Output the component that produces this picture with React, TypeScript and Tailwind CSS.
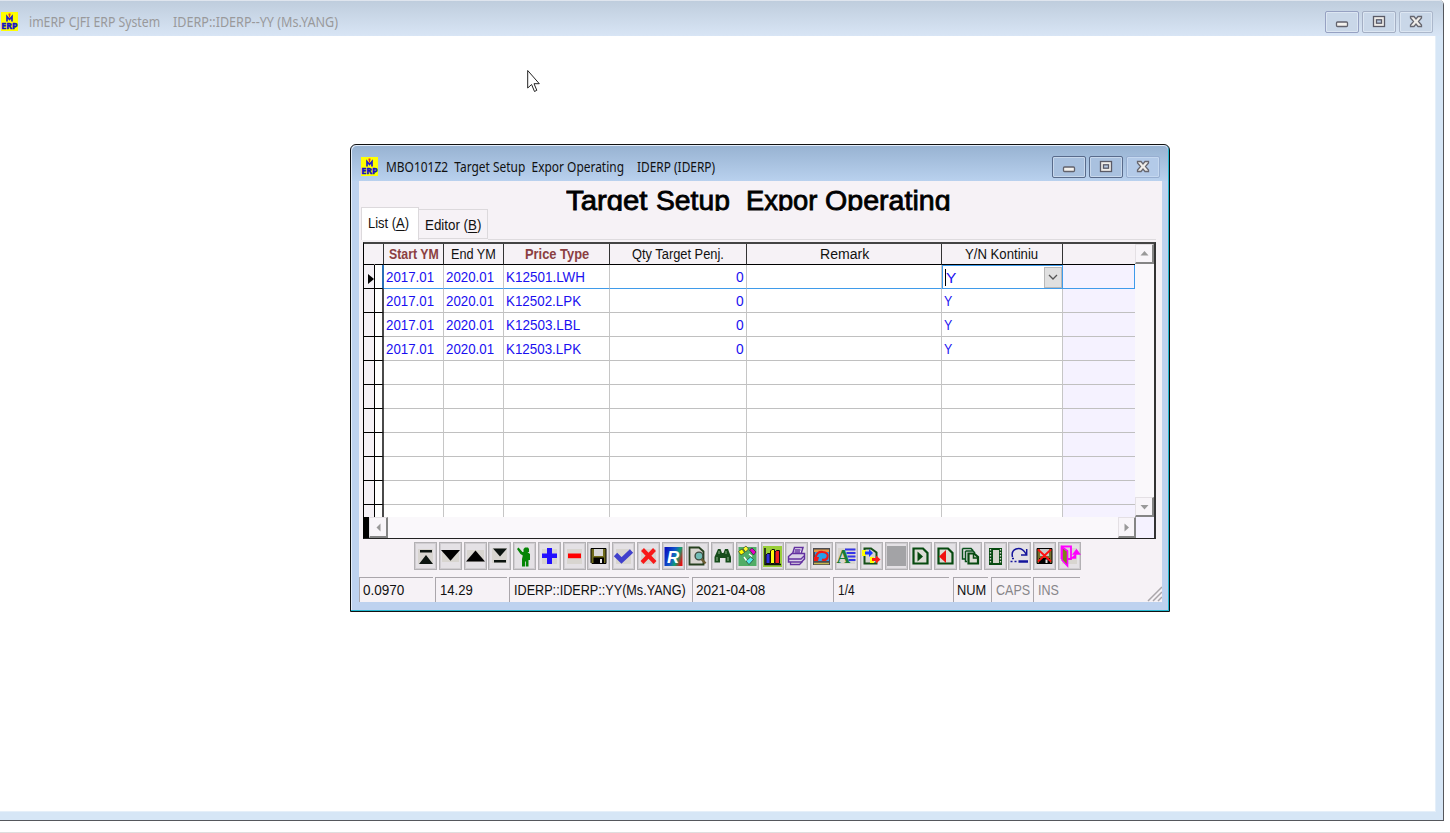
import { useLayoutEffect, useRef, useState, type ReactNode } from "react";

/** Single line of text squeezed or stretched to an exact width. */
function Fit({ w, className = "", children }: { w: number; className?: string; children: ReactNode }) {
  const ref = useRef<HTMLSpanElement>(null);
  const [scale, setScale] = useState(1);
  useLayoutEffect(() => {
    if (ref.current) setScale(w / ref.current.offsetWidth);
  }, [w]);
  return (
    <span className={`block shrink-0 ${className}`} style={{ width: w }}>
      <span ref={ref} className="inline-block origin-left whitespace-pre" style={{ transform: `scaleX(${scale})` }}>
        {children}
      </span>
    </span>
  );
}

function Logo() {
  return (
    <svg className="h-[19px] w-[17px] shrink-0" viewBox="0 0 17 19">
      <rect width="17" height="19" fill="#ffff00" />
      <path d="M6 9.500V4.500L8.500 7.500L11 4.500V9.500" fill="none" stroke="#2020c8" strokeWidth="1.700" />
      <path d="M7.500 1.500H9.500V3.500H9V5.500H8V3.500H7.500Z" fill="#f03020" />
      <text
        x="0.300"
        y="16.800"
        fontSize="8.300"
        fontWeight="bold"
        textLength="16"
        lengthAdjust="spacingAndGlyphs"
        fill="#1010c8"
        stroke="#1010c8"
        strokeWidth=".5"
      >
        ERP
      </text>
    </svg>
  );
}

type Glyph = "min" | "max" | "close";

function CaptionButton({ glyph, cls }: { glyph: Glyph; cls: string }) {
  return (
    <div className={`flex h-[22px] w-[34px] items-center justify-center rounded-[2px] border ${cls}`}>
      <svg className="h-[14px] w-[16px]" viewBox="0 0 16 14">
        {glyph === "min" && (
          <rect x="2.500" y="7" width="11" height="4.500" rx="1" fill="#f4f2ee" stroke="#62626c" strokeWidth="1.300" />
        )}
        {glyph === "max" && (
          <>
            <rect x="2.500" y="1.500" width="11" height="10" fill="#eeece8" stroke="#5a5a66" strokeWidth="1.300" />
            <rect x="5.500" y="4.800" width="5" height="3.400" fill="#b9cbe4" stroke="#5a5a66" strokeWidth="1.300" />
          </>
        )}
        {glyph === "close" && (
          <path
            d="M2.500 1.500H6L8 4L10 1.500H13.500V3L10.500 6.500L13.500 10V11.500H10L8 9L6 11.500H2.500V10L5.500 6.500L2.500 3Z"
            fill="#efede9"
            stroke="#66666f"
            strokeWidth="1.300"
          />
        )}
      </svg>
    </div>
  );
}

const COLS = "grid grid-cols-[11px_9px_60px_60px_106px_137px_195px_121px_72px]";

const rows = [
  ["2017.01", "2020.01", "K12501.LWH", "0", "Y"],
  ["2017.01", "2020.01", "K12502.LPK", "0", "Y"],
  ["2017.01", "2020.01", "K12503.LBL", "0", "Y"],
  ["2017.01", "2020.01", "K12503.LPK", "0", "Y"],
];
const typeWidths = [79, 75, 74, 75];

function HeaderCell({ children, cls = "" }: { children?: ReactNode; cls?: string }) {
  return (
    <div className={`flex items-center justify-center overflow-hidden border-r border-b border-black border-r-[#333] pb-px ${cls}`}>
      {children}
    </div>
  );
}

function Row({ index }: { index: number }) {
  const r = rows[index];
  const active = index === 0;
  const last = index === 10;
  const line = active ? "border-b border-b-[#3f9bea]" : last ? "" : "border-b border-b-[#c0c0c0]";
  const gut = last ? "" : "border-b border-b-black";
  const cell = `flex items-center overflow-hidden border-r border-r-[#c6c6c6] bg-white ${line}`;
  return (
    <div className={`${COLS} ${last ? "h-[12px]" : "h-6"} text-[15.5px] leading-none text-[#1a10f0]`}>
      <div className={`flex items-center justify-end border-r border-r-black bg-[#f5f1f6] ${gut}`}>
        {active && (
          <svg className="mt-[5px] h-[10px] w-[6px]" viewBox="0 0 6 10">
            <path d="M0 0L6 5L0 10Z" fill="#000" />
          </svg>
        )}
      </div>
      <div className={`border-r-2 bg-white ${gut} ${active ? "border-r-[#2a6fb4]" : "border-r-[#4a4a4a]"}`} />
      <div className={`pl-[2px] ${cell}`}>{r && <Fit w={48}>{r[0]}</Fit>}</div>
      <div className={`pl-[2px] ${cell}`}>{r && <Fit w={48}>{r[1]}</Fit>}</div>
      <div className={`pl-[2px] ${cell}`}>{r && <Fit w={typeWidths[index]}>{r[2]}</Fit>}</div>
      <div className={`justify-end pr-[2px] ${cell}`}>{r && <Fit w={8}>{r[3]}</Fit>}</div>
      <div className={cell} />
      {active ? (
        <div className="flex items-center border border-[#3f9bea] bg-white pl-[2px]">
          <span className="h-[17px] w-px bg-black" />
          <Fit w={10} className="mt-[2px]">
            Y
          </Fit>
          <div className="ml-auto flex h-[21px] w-[18px] items-center justify-center border border-[#b8b8b8] bg-[#e0e0e0]">
            <svg className="h-[6px] w-[10px]" viewBox="0 0 10 6">
              <path d="M1 1L5 5L9 1" fill="none" stroke="#555" strokeWidth="1.300" />
            </svg>
          </div>
        </div>
      ) : (
        <div className={`pl-[2px] ${cell}`}>{r && <Fit w={8}>{r[4]}</Fit>}</div>
      )}
      <div className={`bg-[#f5f2ff] ${line} ${active ? "border-r border-r-[#3f9bea]" : ""}`} />
    </div>
  );
}

function ScrollButton({ d, cls }: { d: string; cls: string }) {
  return (
    <div
      className={`flex shrink-0 items-center justify-center border-t border-r-2 border-b-2 border-l border-t-[#e4e0e4] border-r-[#858585] border-b-[#858585] border-l-[#e4e0e4] bg-[#f8f5f9] ${cls}`}
    >
      <svg className="h-[9px] w-[9px]" viewBox="0 0 9 9">
        <path d={d} fill="#999" />
      </svg>
    </div>
  );
}

const doc = "M4.5 6.5H14L18.5 11V21.5H4.5Z";

const tools: ReactNode[] = [
  <>
    <rect x="4" y="7" width="15" height="15" fill="#d8d5d0" />
    <path d="M6 8H18V10.6H6ZM12 13L19 22H5Z" fill="#0c1410" />
  </>,
  <>
    <rect x="3" y="8" width="17" height="12" fill="#d8d5d0" />
    <path d="M2 8H21L11.500 18.700Z" fill="#000" />
  </>,
  <>
    <rect x="3" y="8" width="17" height="12" fill="#d8d5d0" />
    <path d="M2 19.500H21L11.500 8.500Z" fill="#000" />
  </>,
  <>
    <rect x="4" y="6" width="15" height="15" fill="#d8d5d0" />
    <path d="M5 6.500H19L12 14.500ZM6 18H18V20.500H6Z" fill="#0c1410" />
  </>,
  <path
    d="M4 7L5.500 5.500L9.500 10H10.500V7L12 5.500H15L16 7V10H14.500L17 12V18H15.500V24.500H12.800V19.500H12V24.500H9V17L9.800 13.500L7.500 12Z"
    fill="#058505"
  />,
  <>
    <rect x="4" y="7" width="15" height="15" fill="#d8d5d0" />
    <path d="M9 6H14V11.500H19V16H14V22H9V16H4V11.500H9Z" fill="#2310ff" />
  </>,
  <>
    <rect x="4" y="7" width="15" height="15" fill="#d8d5d0" />
    <rect x="5" y="11.500" width="13" height="4.700" fill="#ff0000" />
  </>,
  <>
    <path d="M4 6.500H19V21.500H5L4 20.500Z" fill="#6f6b1c" stroke="#000" />
    <path d="M7 7H16V14H7Z" fill="#d8d8d8" />
    <path d="M6.500 15.500H17V21H6.500Z" fill="#000" />
    <path d="M13 17H15V21H13Z" fill="#e8e8e8" />
  </>,
  <>
    <rect x="4" y="7" width="15" height="15" fill="#d8d5d0" />
    <path d="M3.500 12.500L9.500 18.500L19.500 9" fill="none" stroke="#4040cc" strokeWidth="4.800" />
  </>,
  <>
    <rect x="4" y="7" width="15" height="15" fill="#d8d5d0" />
    <path d="M5.500 7.500L18 20.500M17.500 7.500L5 20.500" fill="none" stroke="#f81818" strokeWidth="4" />
  </>,
  <>
    <rect x="2.500" y="5" width="18" height="19" fill="url(#spectrum)" />
    <text x="5" y="20.500" fontSize="17" fontWeight="bold" fontStyle="italic" fill="#fff">
      R
    </text>
  </>,
  <>
    <path d="M3.500 5.500H13L17.500 9.500V22.500H3.500Z" fill="#d8d5d0" stroke="#26401f" strokeWidth="1.800" />
    <circle cx="13" cy="14" r="3.900" fill="#72bcb6" stroke="#3f4a40" strokeWidth="1.400" />
    <path d="M15.500 17L19.500 21.500" stroke="#6b5a30" strokeWidth="2.500" />
  </>,
  <>
    <path d="M7 7H9.500L11 11H12.500L14 7H17L20 15V20.500H14.500V16H9V20.500H3.500V15Z" fill="#174d1c" />
    <path d="M6 15V19M17 15V19M8 9V12M15 9V12" stroke="#8fb58b" />
  </>,
  <>
    <rect x="2.500" y="5" width="18" height="19" fill="#51ad67" />
    <path d="M2.500 9.500L6 7L8.500 10.500L5 13Z" fill="#ffff00" stroke="#222" strokeWidth=".6" />
    <path d="M7 6.500L10 4L12.500 7L9.500 10Z" fill="#ffff30" stroke="#222" strokeWidth=".6" />
    <path d="M13.500 8L16 6L20 10L17.500 13Z" fill="#e800c8" stroke="#222" strokeWidth=".6" />
    <path d="M10 19L14.500 15L17.500 17.500L13 22.500Z" fill="#52e8e8" stroke="#222" strokeWidth=".6" />
    <path d="M13 12L16 14.500M8 15L10.500 18.500" stroke="#fff" strokeWidth="1.300" />
  </>,
  <>
    <rect x="2" y="4" width="19" height="21" fill="#99ce39" />
    <path d="M4 6V22.500H20" fill="none" stroke="#111" strokeWidth="1.500" />
    <path d="M5 13L6.500 11.500H9V21.500H5Z" fill="#3030e0" stroke="#111" />
    <path d="M9.500 9L11 7.500H13.500V21.500H9.500Z" fill="#ffff10" stroke="#111" />
    <path d="M14 10L15.500 8.500H18.500V21.500H14Z" fill="#f02020" stroke="#111" />
  </>,
  <>
    <path d="M7.500 12L9.500 5.500H18L16 12" fill="#f0ecf6" stroke="#6331a0" strokeWidth="1.500" />
    <path d="M3.500 14.500L7 11.500H19.500V17L16.500 20H3.500Z" fill="#d9d0e6" stroke="#6331a0" strokeWidth="1.500" />
    <path d="M5.500 20V22.500H14.500L17.500 19.500M10 8H15.500M9.500 10H15M4 17H16L19 14" fill="none" stroke="#6331a0" strokeWidth="1.300" />
  </>,
  <>
    <rect x="3" y="6" width="17" height="17" fill="#4a4a50" />
    <rect x="5" y="8" width="14" height="11" fill="#27a0ea" />
    <path d="M4 7.500H19V10H4Z" fill="#e59a42" />
    <path d="M6 18V14Q8 9 13 10Q19 11 17.500 15.500Q16 19 12 17.500" fill="none" stroke="#f01818" strokeWidth="2.200" />
    <path d="M4 15H9L8 19H4Z" fill="#f01818" />
    <path d="M4 21.500H19" stroke="#c8b850" strokeWidth="1.500" />
  </>,
  <>
    <rect x="3" y="6" width="17" height="16" fill="#d8d5d0" />
    <path d="M10 7.500H20.500M11.500 11H20.500M12.500 14.500H20.500M13.500 18H20.500" stroke="#3535e8" strokeWidth="1.800" />
    <text x="1.500" y="21" fontFamily="Liberation Serif" fontSize="19" fontWeight="bold" fill="#187b35">
      A
    </text>
  </>,
  <>
    <path d="M4.500 6.500H11L16.500 10.500V21.500H4.500Z" fill="#d8d5d0" stroke="#155018" strokeWidth="2" />
    <path d="M2 8H6V14H2ZM10 15H14V21H10Z" fill="#ffff00" />
    <path d="M5 9.500H9V7L13 11L9 15V12.500H5Z" fill="#1838ff" />
    <path d="M12 16H16V13.500L20.500 17.500L16 21.500V19H12Z" fill="#ff1818" />
  </>,
  <rect x="2" y="4" width="19" height="20" fill="#a3a3a6" />,
  <>
    <path d={doc} fill="#dcdcd5" stroke="#074a10" strokeWidth="2.200" />
    <path d="M8.500 9.500L14 14.500L8.500 19.500Z" fill="#074a10" />
  </>,
  <>
    <path d={doc} fill="#dcdcd5" stroke="#074a10" strokeWidth="2.200" />
    <path d="M12 8V21L5 14.500Z" fill="#f01010" />
  </>,
  <>
    <path d="M3.500 6.500H12L14 8.500M3.500 6.500V17H6M6.500 9H14L16 11M6.500 9V19.500H8" fill="none" stroke="#07501a" strokeWidth="1.500" />
    <path d="M9.500 11.500H15L19 15V21.500H9.500Z" fill="#dcdcd5" stroke="#074a10" strokeWidth="2.200" />
    <path d="M14.500 11V16H19" fill="none" stroke="#074a10" strokeWidth="1.500" />
  </>,
  <>
    <rect x="5" y="6" width="13" height="17" fill="#074a10" />
    <rect x="9" y="8" width="6" height="13" fill="#d4d4ca" />
    <path d="M6.500 7V22M16.500 7V22" stroke="#d4d4ca" strokeWidth="1.300" strokeDasharray="1.500 1.500" />
  </>,
  <>
    <path d="M4.500 15Q3 9 8 7Q14 5 18 12M18.700 7V13H13" fill="none" stroke="#15159c" strokeWidth="1.500" />
    <path d="M10.500 19.500H20" stroke="#15159c" strokeWidth="2.500" />
    <path d="M4 16.500H6M6.500 19.500H8.500M2.500 19.500H4.500" stroke="#15159c" strokeWidth="1.700" />
  </>,
  <>
    <path d="M4 6.500H19V21.500H4Z" fill="#76702b" stroke="#000" />
    <path d="M7 7H16V14H7Z" fill="#c8c8c8" />
    <path d="M6 16H17V21H6Z" fill="#000" />
    <path d="M12.500 17.500H14.500V21H12.500Z" fill="#ddd" />
    <path d="M5 7.500L18 19.500M18 7.500L5 19.500" stroke="#ff1010" strokeWidth="1.900" />
  </>,
  <>
    <rect x="4" y="6" width="15" height="16" fill="#d8d5d0" />
    <path d="M3.500 17V4.500H13V17H10" fill="none" stroke="#ff00ff" strokeWidth="1.800" />
    <path d="M4 5L9.500 9V24L4 18Z" fill="#7e8218" stroke="#ff00ff" strokeWidth="1.600" />
    <path d="M13 16H17.500V12M15.500 12L18.500 8L21.500 12Z" fill="#ff00ff" stroke="#ff00ff" strokeWidth="1.500" />
  </>,
];

function StatusPanel({ cls, w, children }: { cls: string; w: number; children: ReactNode }) {
  return (
    <div className={`flex h-[25px] shrink-0 items-center overflow-hidden border-t border-l border-[#aaa6ab] pb-px text-[15.500px] ${cls}`}>
      <Fit w={w}>{children}</Fit>
    </div>
  );
}

export default function App() {
  return (
    <div className="relative flex h-[833px] w-[1450px] flex-col justify-between overflow-hidden bg-white font-['Liberation_Sans',sans-serif] text-[15px] leading-none text-[#111]">
      <div className="flex h-[821px] w-[1444px] flex-col rounded-tr-[5px] border-r border-b border-[#55575c] bg-[#d6e6f6]">
        <header className="flex h-9 shrink-0 items-center rounded-tr-[4px] border-t border-[#dfe5ee] bg-gradient-to-b from-[#bfcddd] to-[#d8e5f5] pt-[6px] pr-[10px] pl-px font-['Noto_Sans',sans-serif] text-[14.500px] text-[#99999b]">
          <Logo />
          <Fit w={131} className="ml-[11px]">
            imERP CJFI ERP System
          </Fit>
          <Fit w={165} className="ml-[13px]">
            IDERP::IDERP--YY (Ms.YANG)
          </Fit>
          <div className="ml-auto flex gap-[3px]">
            <CaptionButton glyph="min" cls="border-[#96a1c2] bg-[#c9d7e8] shadow-[inset_0_0_0_1px_#dce6f2]" />
            <CaptionButton glyph="max" cls="border-[#a4afc4] bg-[#c9d7e8] shadow-[inset_0_0_0_1px_#dce6f2]" />
            <CaptionButton glyph="close" cls="border-[#abb7cb] bg-[#c9d7e8] shadow-[inset_0_0_0_1px_#dce6f2]" />
          </div>
        </header>
        <main className="mr-[7px] mb-2 grow border-r border-b border-[#e5eff9] bg-white" />
      </div>
      <div className="h-px bg-[#dedede]" />

      <svg className="absolute top-[69px] left-[527px] h-[24px] w-[14px]" viewBox="0 0 14 24">
        <path d="M.7 1.500V19L4.600 15.500L7.500 22.500L9.800 21.300L7 14.700H12.300Z" fill="#fff" stroke="#222" />
      </svg>

      <section className="absolute top-[144px] left-[350px] flex h-[468px] w-[820px] flex-col rounded-t-[6px] border border-[#111] bg-[#bed2ef] shadow-[inset_-1px_-1px_0_#25b8d0,inset_1px_1px_0_#e4eefb]">
        <header className="mx-px mt-px flex h-[35px] shrink-0 items-center rounded-t-[5px] bg-gradient-to-b from-[#98b3d2] to-[#b9d1ee] pt-[6px] pr-[8px] pl-[9px] font-['Noto_Sans',sans-serif] text-[14.500px]">
          <Logo />
          <Fit w={238} className="ml-[8px]">
            MBO101Z2  Target Setup  Expor Operating
          </Fit>
          <Fit w={78} className="ml-[13px]">
            IDERP (IDERP)
          </Fit>
          <div className="ml-auto flex gap-[3px]">
            <CaptionButton glyph="min" cls="border-[#596b8b] bg-[#a9c1df] shadow-[inset_0_0_0_1px_#c8d8ec]" />
            <CaptionButton glyph="max" cls="border-[#596b8b] bg-[#a9c1df] shadow-[inset_0_0_0_1px_#c8d8ec]" />
            <CaptionButton glyph="close" cls="border-[#97aed0] bg-[#b3cae8] shadow-[inset_0_0_0_1px_#c5d8f0]" />
          </div>
        </header>

        <div className="mx-[8px] flex h-[421px] w-[803px] shrink-0 flex-col bg-[#f6f2f6]">
          <div className="h-[26px]">
            <h1 className="ml-[207px] flex h-[30px] overflow-hidden pt-[5px] text-[27px] leading-[30px] font-normal text-black [-webkit-text-stroke:0.8px_black]">
              <Fit w={90}>Target </Fit>
              <Fit w={90}>Setup  </Fit>
              <Fit w={79}>Expor </Fit>
              <Fit w={126}>Operating</Fit>
            </h1>
          </div>
          <nav className="ml-[2px] flex h-[33px] shrink-0 items-end text-[15.500px]">
            <div className="flex h-[33px] w-[58px] items-center border border-b-0 border-[#dcd9dc] bg-white pb-[3px] pl-[6px]">
              <Fit w={41}>
                List (<u className="underline-offset-2">A</u>)
              </Fit>
            </div>
            <div className="mb-px flex h-[30px] w-[69px] items-center border border-l-0 border-[#dcd9dc] pt-px pl-[6px]">
              <Fit w={56}>
                Editor (<u className="underline-offset-2">B</u>)
              </Fit>
            </div>
            <div className="mr-[6px] h-px grow bg-[#dedbde]" />
          </nav>

          <div className="mt-[2px] ml-[4px] flex h-[297px] w-[793px] shrink-0 flex-col border-t-2 border-r-2 border-b border-l border-t-[#444] border-r-[#333] border-b-[#222] border-l-black bg-[#faf8fb]">
            <div className="flex h-[273px]">
              <div className="w-[771px]">
                <div className={`${COLS} h-[21px] bg-[#f6f2f6] text-[15.500px]`}>
                  <HeaderCell cls="border-r-transparent" />
                  <HeaderCell />
                  <HeaderCell cls="font-bold text-[#8b3f42]">
                    <Fit w={50}>Start YM</Fit>
                  </HeaderCell>
                  <HeaderCell>
                    <Fit w={45}>End YM</Fit>
                  </HeaderCell>
                  <HeaderCell cls="font-bold text-[#8b3f42]">
                    <Fit w={64}>Price Type</Fit>
                  </HeaderCell>
                  <HeaderCell>
                    <Fit w={92}>Qty Target Penj.</Fit>
                  </HeaderCell>
                  <HeaderCell>
                    <Fit w={49}>Remark</Fit>
                  </HeaderCell>
                  <HeaderCell cls="pr-[2px]">
                    <Fit w={73}>Y/N Kontiniu</Fit>
                  </HeaderCell>
                  <HeaderCell cls="border-r-0" />
                </div>
                {Array.from({ length: 11 }, (_, i) => (
                  <Row key={i} index={i} />
                ))}
              </div>
              <div className="flex w-[19px] flex-col justify-between bg-[#faf8fb]">
                <ScrollButton d="M0.500 6.500H8.500L4.500 2Z" cls="h-[20px]" />
                <ScrollButton d="M0.500 3H8.500L4.500 7.500Z" cls="h-[20px]" />
              </div>
            </div>
            <div className="flex h-[21px] items-stretch">
              <div className="w-[5px] bg-black" />
              <ScrollButton d="M6.500 0.500V8.500L2.500 4.500Z" cls="w-[19px]" />
              <div className="grow" />
              <ScrollButton d="M2.500 0.500V8.500L7 4.500Z" cls="w-[18px]" />
              <div className="w-[18px] bg-[#f5f2ff]" />
            </div>
          </div>

          <div className="mt-[3px] ml-[55px] flex h-[28px] w-[667px] shrink-0 justify-between">
            {tools.map((icon, i) => (
              <div
                key={i}
                className="h-[28px] w-[23px] border border-[#b3b1b4] bg-[#e4e1e5] shadow-[inset_0_0_0_1px_#d0cdd1]"
              >
                <svg className="-mt-px -ml-px h-[28px] w-[23px]" viewBox="0 0 23 28">
                  <defs>
                    <linearGradient id="spectrum" x1="0" y1="0.3" x2="1" y2="0.7">
                      <stop offset="0" stopColor="#0815c0" />
                      <stop offset=".45" stopColor="#1458c8" />
                      <stop offset=".7" stopColor="#10a070" />
                      <stop offset="1" stopColor="#e01010" />
                    </linearGradient>
                  </defs>
                  {icon}
                </svg>
              </div>
            ))}
          </div>

          <footer className="mt-[7px] flex h-[25px] shrink-0">
            <StatusPanel cls="w-[74px] pl-[3px]" w={41}>0.0970</StatusPanel>
            <StatusPanel cls="ml-[2px] w-[72px] pl-[4px]" w={33}>14.29</StatusPanel>
            <StatusPanel cls="ml-[2px] w-[180px] pl-[4px]" w={172}>IDERP::IDERP::YY(Ms.YANG)</StatusPanel>
            <StatusPanel cls="ml-[3px] w-[138px] pl-[3px]" w={69}>2021-04-08</StatusPanel>
            <StatusPanel cls="ml-[3px] w-[116px] pl-[4px]" w={17}>1/4</StatusPanel>
            <StatusPanel cls="ml-[4px] w-[35px] pl-[3px]" w={29}>NUM</StatusPanel>
            <StatusPanel cls="ml-[3px] w-[40px] pl-[4px] text-[#88868a]" w={34}>CAPS</StatusPanel>
            <StatusPanel cls="ml-[2px] w-[47px] pl-[4px] text-[#88868a]" w={21}>INS</StatusPanel>
            <svg className="mt-auto ml-auto h-[16px] w-[15px]" viewBox="0 0 15 16">
              <path d="M1 15L15 1M6 15L15 6M11 15L15 11" stroke="#aaa6aa" strokeWidth="1.500" />
            </svg>
          </footer>
        </div>
      </section>
    </div>
  );
}
